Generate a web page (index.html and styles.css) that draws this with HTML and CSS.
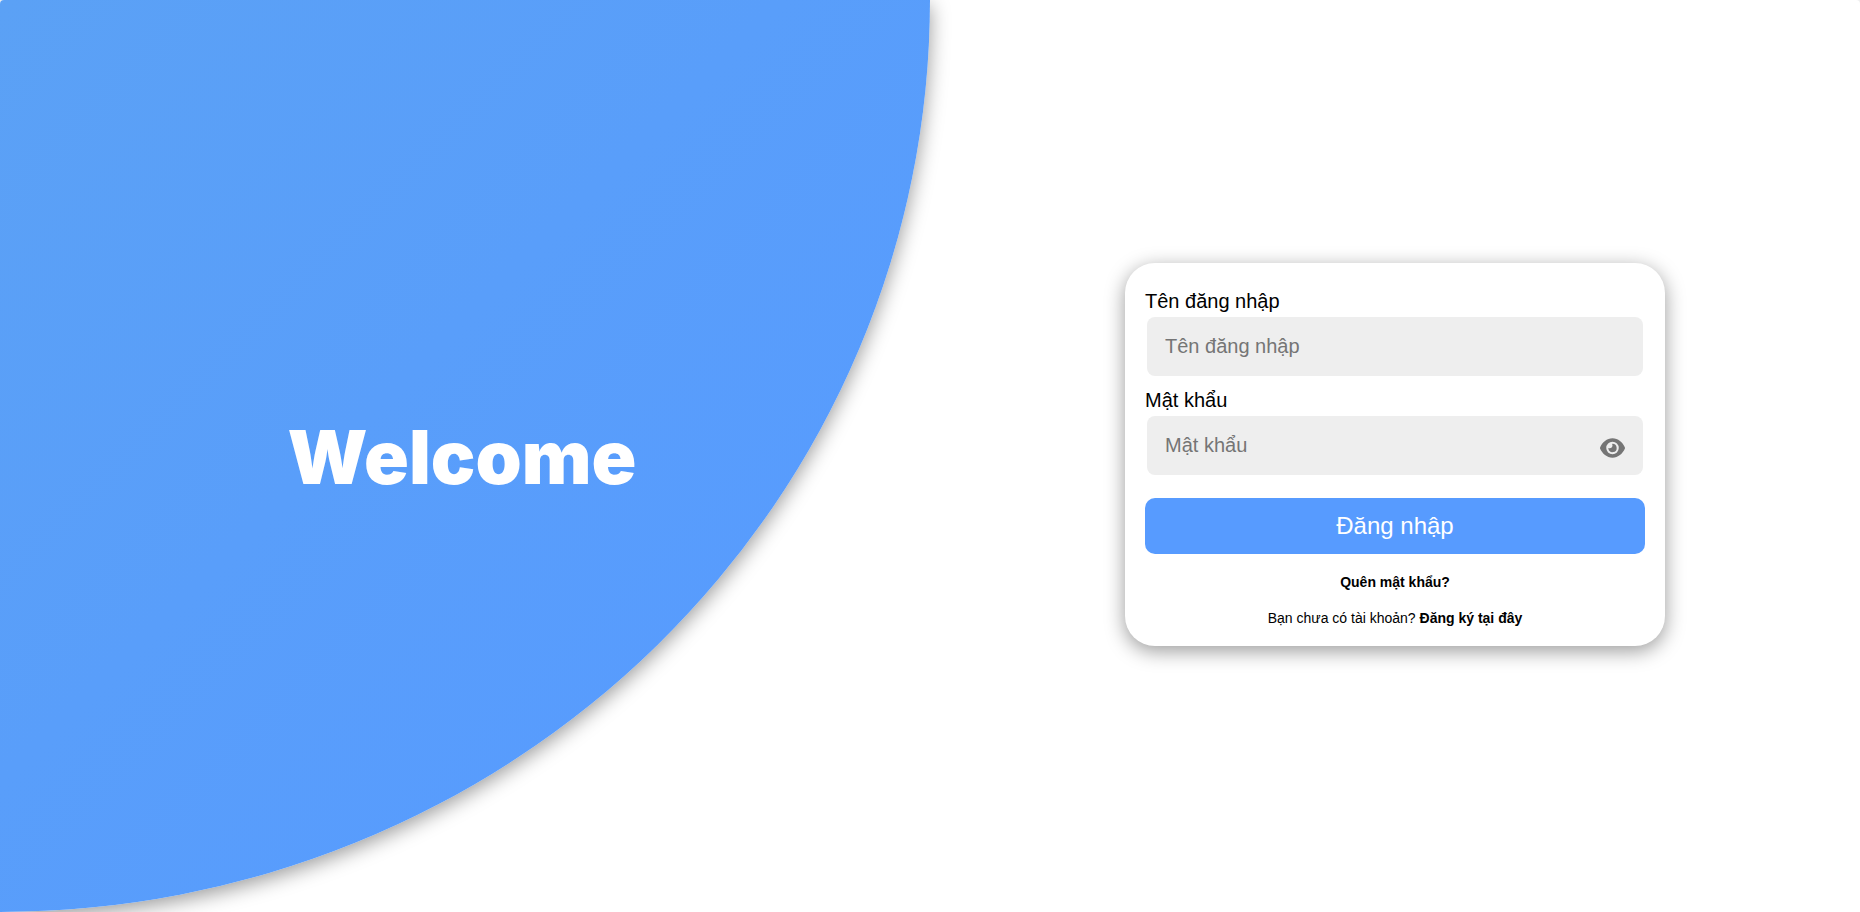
FILE: index.html
```html
<!DOCTYPE html>
<html lang="vi">
<head>
<meta charset="utf-8">
<meta name="viewport" content="width=device-width, initial-scale=1">
<title>Đăng nhập</title>
<link rel="stylesheet" href="styles.css">
</head>
<body>
<main class="page">
  <section class="hero">
    <h1 class="hero-title">Welcome</h1>
  </section>
  <section class="login">
    <form class="card">
      <label class="label" for="username">Tên đăng nhập</label>
      <div class="field">
        <input class="input" id="username" type="text" placeholder="Tên đăng nhập">
      </div>
      <label class="label" for="password">Mật khẩu</label>
      <div class="field">
        <input class="input" id="password" type="password" placeholder="Mật khẩu">
        <button class="toggle" type="button" aria-label="Hiện mật khẩu">
          <svg class="eye" viewBox="0 0 576 512" aria-hidden="true"><path fill="currentColor" fill-rule="evenodd" d="M288 32C160 32 50 130 4 238q-7 18 0 36C50 382 160 480 288 480S526 382 572 274q7-18 0-36C526 130 416 32 288 32zM288 112a144 144 0 1 1 0 288a144 144 0 1 1 0-288z"/><path fill="currentColor" d="M288 160a96 96 0 1 1-93 120c-3-10-4-18-3-25c10 6 21 9 32 9c35 0 64-29 64-64c0-15-4-28-11-39q5-1 11-1z"/></svg>
        </button>
      </div>
      <button class="submit" type="submit">Đăng nhập</button>
      <p class="note"><a class="link" href="#forgot">Quên mật khẩu?</a></p>
      <p class="note">Bạn chưa có tài khoản? <a class="link" href="#register">Đăng ký tại đây</a></p>
    </form>
  </section>
</main>
</body>
</html>
```
FILE: styles.css
```css
* {
  box-sizing: border-box;
}

html {
  background: #eee;
}

body {
  margin: 0;
  font-family: Arial, "Liberation Sans", sans-serif;
  color: #000;
}

.page {
  display: grid;
  grid-template-columns: 1fr 1fr;
  min-height: 100vh;
  overflow: hidden;
  background: #fff;
  border-top-right-radius: 4px;
}

.hero {
  display: flex;
  align-items: center;
  justify-content: center;
  padding: 2px 6px 0 0;
  background: linear-gradient(135deg, #5ba1f5, #579bff 85%);
  border-radius: 4px 0 100% 0;
  box-shadow: 0 5px 20px rgba(0, 0, 0, 0.4);
}

.hero-title {
  margin: 0;
  font-family: "Arial Black", Inter, sans-serif;
  font-size: 74px;
  font-weight: 900;
  line-height: 84px;
  color: #fff;
}

.login {
  display: flex;
  align-items: center;
  justify-content: center;
  padding: 0 20px 3px;
}

.card {
  width: 100%;
  max-width: 540px;
  padding: 24px 20px 10px;
  background: #fff;
  border-radius: 30px;
  box-shadow: 0 5px 20px rgba(0, 0, 0, 0.4);
}

.label {
  display: block;
  font-size: 20px;
  line-height: 28px;
}

.field {
  position: relative;
  margin: 2px 2px 10px;
}

.input {
  display: block;
  width: 100%;
  height: 59px;
  padding: 0 18px;
  border: 0;
  border-radius: 8px;
  background: #eee;
  font: inherit;
  font-size: 20px;
}

.input::placeholder {
  color: #757575;
}

.toggle {
  position: absolute;
  top: 20px;
  right: 18px;
  display: flex;
  padding: 0;
  border: 0;
  background: none;
  color: #757575;
}

.eye {
  width: 25px;
  height: 24px;
}

.submit {
  display: block;
  width: 100%;
  height: 56px;
  margin: 23px 0 10px;
  border: 0;
  border-radius: 10px;
  background: #579bff;
  font: inherit;
  font-size: 24px;
  color: #fff;
}

.note {
  margin: 0;
  font-size: 14px;
  line-height: 36px;
  text-align: center;
}

.link {
  color: #000;
  font-weight: bold;
  text-decoration: none;
}
```
